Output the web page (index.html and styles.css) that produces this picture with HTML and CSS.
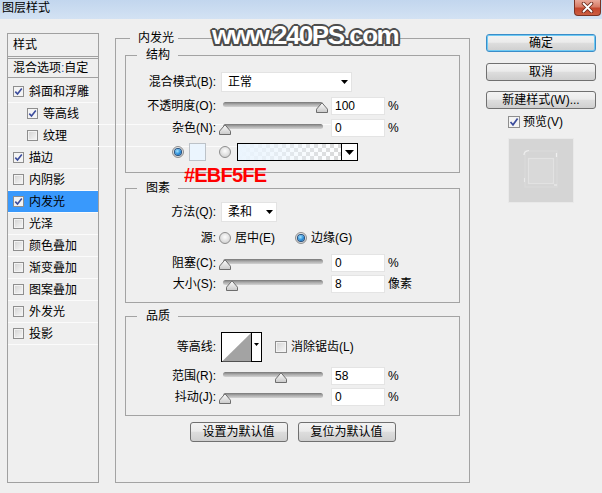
FILE: index.html
```html
<!DOCTYPE html>
<html lang="zh">
<head>
<meta charset="utf-8">
<title>图层样式</title>
<link rel="stylesheet" href="styles.css">
</head>
<body>
<div class="window">
  <header class="titlebar">
    <span class="title">图层样式</span>
    <button class="close" aria-label="关闭">
      <svg width="13" height="11" viewBox="0 0 13 11"><path d="M2.5 1.5 L10.5 9.5 M10.5 1.5 L2.5 9.5" stroke="#6e2a1c" stroke-width="3.6" stroke-linecap="round"/><path d="M2.5 1.5 L10.5 9.5 M10.5 1.5 L2.5 9.5" stroke="#ffffff" stroke-width="1.8" stroke-linecap="round"/></svg>
    </button>
  </header>

  <div class="content">
    <aside class="styles-list">
      <div class="list-head">样式</div>
      <div class="list-blend">混合选项<span class="colon">:</span>自定</div>
      <ul class="fx">
        <li><span class="cb small on"><svg width="9" height="9" viewBox="0 0 9 9"><path d="M1.3 4.6 L3.5 7 L7.8 1.4" fill="none" stroke="#3b4c9c" stroke-width="1.6"/></svg></span>斜面和浮雕</li>
        <li class="sub"><span class="cb small on"><svg width="9" height="9" viewBox="0 0 9 9"><path d="M1.3 4.6 L3.5 7 L7.8 1.4" fill="none" stroke="#3b4c9c" stroke-width="1.6"/></svg></span>等高线</li>
        <li class="sub"><span class="cb small"></span>纹理</li>
        <li><span class="cb small on"><svg width="9" height="9" viewBox="0 0 9 9"><path d="M1.3 4.6 L3.5 7 L7.8 1.4" fill="none" stroke="#3b4c9c" stroke-width="1.6"/></svg></span>描边</li>
        <li><span class="cb small"></span>内阴影</li>
        <li class="active"><span class="cb small on"><svg width="9" height="9" viewBox="0 0 9 9"><path d="M1.3 4.6 L3.5 7 L7.8 1.4" fill="none" stroke="#3b4c9c" stroke-width="1.6"/></svg></span>内发光</li>
        <li><span class="cb small"></span>光泽</li>
        <li><span class="cb small"></span>颜色叠加</li>
        <li><span class="cb small"></span>渐变叠加</li>
        <li><span class="cb small"></span>图案叠加</li>
        <li><span class="cb small"></span>外发光</li>
        <li><span class="cb small"></span>投影</li>
      </ul>
    </aside>

    <fieldset class="group main">
      <legend>内发光</legend>

      <fieldset class="group sub struct">
        <legend>结构</legend>
        <div class="row r-mode">
          <span class="lbl">混合模式(B):</span>
          <div class="select wide"><span>正常</span><svg width="7" height="4" viewBox="0 0 7 4"><path d="M0 0 H7 L3.5 4 Z" fill="#000"/></svg></div>
        </div>
        <div class="row r-op">
          <span class="lbl">不透明度(O):</span>
          <div class="slider"><div class="track"></div><span class="thumb" style="left:97px"><svg width="12" height="11" viewBox="0 0 12 11"><defs><linearGradient id="tg1" x1="0" y1="0" x2="0" y2="1"><stop offset="0" stop-color="#fdfdfd"/><stop offset="1" stop-color="#c9c9c9"/></linearGradient></defs><path d="M0.5 10.5 V7.2 L6 0.8 L11.5 7.2 V10.5 Z" fill="url(#tg1)" stroke="#6d6d6d"/></svg></span></div>
          <span class="num">100</span><span class="unit">%</span>
        </div>
        <div class="row r-noise">
          <span class="lbl">杂色(N):</span>
          <div class="slider"><div class="track"></div><span class="thumb" style="left:0px"><svg width="12" height="11" viewBox="0 0 12 11"><path d="M0.5 10.5 V7.2 L6 0.8 L11.5 7.2 V10.5 Z" fill="url(#tg1)" stroke="#6d6d6d"/></svg></span></div>
          <span class="num">0</span><span class="unit">%</span>
        </div>
        <div class="row r-color">
          <span class="radio on"></span>
          <span class="swatch"></span>
          <span class="radio gap-radio"></span>
          <div class="gradbox"><span class="grad"></span><span class="drop"><svg width="9" height="5" viewBox="0 0 9 5"><path d="M0 0 H9 L4.5 5 Z" fill="#000"/></svg></span></div>
        </div>
      </fieldset>

      <fieldset class="group sub elements">
        <legend>图素</legend>
        <div class="row r-method">
          <span class="lbl">方法(Q):</span>
          <div class="select narrow"><span>柔和</span><svg width="7" height="4" viewBox="0 0 7 4"><path d="M0 0 H7 L3.5 4 Z" fill="#000"/></svg></div>
        </div>
        <div class="row r-source">
          <span class="lbl">源:</span>
          <span class="radio src1"></span><span class="opt">居中(E)</span>
          <span class="radio on src2"></span><span class="opt">边缘(G)</span>
        </div>
        <div class="row r-choke">
          <span class="lbl">阻塞(C):</span>
          <div class="slider"><div class="track"></div><span class="thumb" style="left:0px"><svg width="12" height="11" viewBox="0 0 12 11"><path d="M0.5 10.5 V7.2 L6 0.8 L11.5 7.2 V10.5 Z" fill="url(#tg1)" stroke="#6d6d6d"/></svg></span></div>
          <span class="num">0</span><span class="unit">%</span>
        </div>
        <div class="row r-size">
          <span class="lbl">大小(S):</span>
          <div class="slider"><div class="track"></div><span class="thumb" style="left:7px"><svg width="12" height="11" viewBox="0 0 12 11"><path d="M0.5 10.5 V7.2 L6 0.8 L11.5 7.2 V10.5 Z" fill="url(#tg1)" stroke="#6d6d6d"/></svg></span></div>
          <span class="num">8</span><span class="unit">像素</span>
        </div>
      </fieldset>

      <fieldset class="group sub quality">
        <legend>品质</legend>
        <div class="row r-contour">
          <span class="lbl">等高线:</span>
          <span class="contour"><svg width="41" height="30" viewBox="0 0 41 30"><rect x="0.5" y="0.5" width="40" height="29" fill="#fff" stroke="#000"/><path d="M1 29.5 L30 1 V29.5 Z" fill="#a3a3a3"/><path d="M30.5 0.5 V29.5" stroke="#000"/><path d="M33 11 H38 L35.5 14 Z" fill="#000"/></svg></span>
          <span class="cb aa"></span><span class="opt">消除锯齿(L)</span>
        </div>
        <div class="row r-range">
          <span class="lbl">范围(R):</span>
          <div class="slider"><div class="track"></div><span class="thumb" style="left:56px"><svg width="12" height="11" viewBox="0 0 12 11"><path d="M0.5 10.5 V7.2 L6 0.8 L11.5 7.2 V10.5 Z" fill="url(#tg1)" stroke="#6d6d6d"/></svg></span></div>
          <span class="num">58</span><span class="unit">%</span>
        </div>
        <div class="row r-jitter">
          <span class="lbl">抖动(J):</span>
          <div class="slider"><div class="track"></div><span class="thumb" style="left:0px"><svg width="12" height="11" viewBox="0 0 12 11"><path d="M0.5 10.5 V7.2 L6 0.8 L11.5 7.2 V10.5 Z" fill="url(#tg1)" stroke="#6d6d6d"/></svg></span></div>
          <span class="num">0</span><span class="unit">%</span>
        </div>
      </fieldset>

      <div class="defaults">
        <button class="btn def">设置为默认值</button>
        <button class="btn def">复位为默认值</button>
      </div>
    </fieldset>

    <div class="side">
      <button class="btn side-btn primary">确定</button>
      <button class="btn side-btn cancel">取消</button>
      <button class="btn side-btn newstyle">新建样式(W)...</button>
      <label class="preview-check"><span class="cb on"><svg width="10" height="10" viewBox="0 0 10 10"><path d="M1.5 5 L4 7.8 L8.6 1.6" fill="none" stroke="#3b4c9c" stroke-width="1.7"/></svg></span>预览(V)</label>
      <div class="preview">
        <svg width="66" height="65" viewBox="0 0 66 65">
          <rect x="0.5" y="0.5" width="65" height="64" fill="#d5d5d5" stroke="#e9e9e9"/>
          <rect x="17" y="13" width="32" height="36" fill="none" stroke="#d9d9d9" stroke-width="1.5"/>
          <rect x="20.5" y="20.5" width="25" height="25" fill="#d9d9d9" stroke="#e2e2e2" stroke-width="1.2"/>
          <path d="M16 17 Q16 13 21 12.5" fill="none" stroke="#efefef" stroke-width="1.2"/>
          <path d="M48.5 15 V19" stroke="#f0f0f0" stroke-width="1.2"/>
          <path d="M46 47 H49" stroke="#eeeeee" stroke-width="1.1"/>
          <path d="M16.5 40 V44" stroke="#e9e9e9" stroke-width="1.1"/>
        </svg>
      </div>
    </div>
  </div>

  <div class="watermark">www.240PS.com</div>
  <div class="note">#EBF5FE</div>
</div>
</body>
</html>
```

FILE: styles.css
```css
* { box-sizing: border-box; }
html, body { margin: 0; padding: 0; }
body {
  width: 602px;
  height: 493px;
  overflow: hidden;
  background: #efefef;
  font-family: "Liberation Sans", "Noto Sans CJK SC", sans-serif;
  font-size: 12px;
  line-height: 16px;
  color: #000;
}
.window { position: relative; width: 602px; height: 493px; }

/* title bar */
.titlebar {
  display: flex;
  justify-content: space-between;
  align-items: flex-start;
  height: 19px;
  background: linear-gradient(#c2d6ee, #d3e2f3);
}
.title { padding: 1px 0 0 2px; line-height: 14px; }
.close {
  width: 27px;
  height: 16px;
  margin-right: 1px;
  padding: 0;
  border: 1px solid #7a3224;
  border-top: none;
  border-radius: 0 0 4px 4px;
  background: linear-gradient(#eaa99a, #d77c67 45%, #c4462d 55%, #cc5e42);
  display: flex;
  align-items: center;
  justify-content: center;
}

/* main layout */
.content {
  display: flex;
  align-items: flex-start;
  padding: 11px 0 0 7px;
}

/* styles list */
.styles-list {
  width: 92px;
  height: 450px;
  margin-top: 3px;
  border: 1px solid #a0a0a0;
  flex: none;
}
.list-head {
  height: 25px;
  padding-left: 5px;
  line-height: 22px;
  border-bottom: 3px double #a0a0a0;
}
.list-blend {
  height: 19px;
  padding-left: 5px;
  line-height: 18px;
  border-bottom: 1px solid #a0a0a0;
}
.colon { color: #2a5db0; }
.fx { list-style: none; margin: 0; padding: 3px 0 0; }
.fx li {
  display: flex;
  align-items: center;
  height: 22px;
  padding-left: 5px;
  border-bottom: 1px solid #fbfbfb;
}
.fx li.sub { padding-left: 19px; }
.fx li.active { background: #3999fc; }

/* checkbox */
.cb {
  display: inline-flex;
  align-items: center;
  justify-content: center;
  flex: none;
  width: 12px;
  height: 12px;
  border: 1px solid #8e8e8e;
  background: linear-gradient(135deg, #d2d2d2, #f8f8f8);
  box-shadow: inset 0 0 0 1px #f3f3f3;
}
.cb.small { width: 11px; height: 11px; margin-right: 5px; }
.cb.on { background: #f4f4f4; box-shadow: none; }

/* fieldsets */
.group {
  margin: 0;
  border: 1px solid #a3a3a3;
  min-width: 0;
}
.group > legend {
  margin-left: 5px;
  padding: 0 4px 0 8px;
  line-height: 16px;
  font-size: 12px;
}
.main {
  width: 355px;
  height: 453px;
  margin-left: 16px;
  padding: 1px 9px 0;
  flex: none;
}
.sub { width: 335px; padding: 0; }
.sub > legend { margin-left: 11px; padding: 0 8px 0 9px; }
.struct { padding-bottom: 10px; }
.elements { margin-top: 7px; padding-bottom: 8px; }
.quality { margin-top: 5px; padding-bottom: 8px; }

/* rows */
.row { display: flex; align-items: center; height: 20px; }
.r-mode { margin-top: 9px; }
.r-op { margin-top: 4px; }
.r-noise { margin-top: 2px; }
.r-color { margin-top: 4px; padding-left: 46px; }
.r-method { margin-top: 6px; }
.r-source { margin-top: 6px; }
.r-choke { margin-top: 5px; }
.r-size { margin-top: 1px; }
.r-contour { margin-top: 8px; height: 30px; }
.r-range { margin-top: 4px; }
.r-jitter { margin-top: 1px; }

.lbl { width: 90px; text-align: right; flex: none; white-space: nowrap; }

.select {
  display: flex;
  align-items: center;
  justify-content: space-between;
  height: 20px;
  margin-left: 5px;
  padding: 0 3px 0 6px;
  background: #fff;
  border: 1px solid #e3e3e3;
}
.select.wide { width: 131px; }
.select.narrow { width: 56px; }

.slider {
  position: relative;
  width: 110px;
  height: 20px;
  margin-left: 3px;
  flex: none;
}
.track {
  height: 5px;
  margin: 6px 6px 0 4px;
  border-radius: 3px;
  background: linear-gradient(#777777, #a8a8a8 45%, #d3d3d3);
}
.thumb { position: absolute; top: 6px; width: 12px; height: 11px; display: block; }
.thumb svg { display: block; }

.num {
  width: 54px;
  height: 18px;
  margin-left: 2px;
  padding-left: 3px;
  background: #fff;
  border: 1px solid #e4e4e4;
  line-height: 16px;
  flex: none;
}
.unit { margin-left: 3px; }

/* radio */
.radio {
  display: flex;
  align-items: center;
  justify-content: center;
  flex: none;
  width: 12px;
  height: 12px;
  border-radius: 50%;
  border: 1px solid #8d8d8d;
  background: radial-gradient(circle at 50% 40%, #fdfdfd, #dadada 65%, #c6c6c6);
}
.radio.on::after {
  content: "";
  width: 6px;
  height: 6px;
  border-radius: 50%;
  background: radial-gradient(circle at 40% 35%, #a6e4ff, #2289d8 60%, #0c4f92);
  box-shadow: 0 0 0 1px #244f7e;
}
.gap-radio { margin-left: 13px; }
.src1 { margin-left: 3px; }
.src2 { margin-left: 20px; }
.opt { margin-left: 4px; white-space: nowrap; }

.swatch {
  width: 17px;
  height: 18px;
  margin-left: 5px;
  background: #EBF5FE;
  border: 1px solid #bcc2c8;
  flex: none;
}
.gradbox {
  display: flex;
  width: 121px;
  height: 18px;
  margin-left: 6px;
  border: 1px solid #000;
  flex: none;
}
.grad {
  flex: 1;
  background:
    linear-gradient(to right, #EBF5FE 0%, rgba(235, 245, 254, 0.7) 35%, rgba(235, 245, 254, 0) 100%),
    repeating-conic-gradient(#d9d9d9 0 25%, #ffffff 0 50%) 0 0 / 8px 8px;
}
.drop {
  display: flex;
  align-items: center;
  justify-content: center;
  width: 16px;
  background: #fff;
  border-left: 1px solid #000;
}

.contour { margin-left: 5px; width: 41px; height: 30px; flex: none; }
.contour svg { display: block; }
.aa { margin-left: 13px; }

/* buttons */
.btn {
  font: inherit;
  color: #000;
  padding: 0;
  border: 1px solid #707070;
  border-radius: 3px;
  background: linear-gradient(#f3f3f3, #ebebeb 45%, #dddddd 52%, #cfcfcf);
  line-height: 16px;
}
.defaults {
  display: flex;
  justify-content: center;
  gap: 10px;
  margin-top: 6px;
}
.btn.def { width: 98px; height: 20px; }

.side {
  display: flex;
  flex-direction: column;
  width: 110px;
  margin: 4px 0 0 16px;
  flex: none;
}
.side-btn { width: 110px; height: 18px; }
.primary {
  border-color: #3a8dc9;
  box-shadow: inset 0 0 0 1px #6fcaf3;
}
.cancel { margin-top: 11px; }
.newstyle { margin-top: 10px; }
.preview-check {
  display: flex;
  align-items: center;
  height: 12px;
  margin-top: 7px;
  padding-left: 22px;
}
.preview-check .cb { margin-right: 3px; }
.preview { margin: 10px 0 0 22px; width: 66px; height: 65px; }
.preview svg { display: block; }

/* overlays */
.watermark {
  position: absolute;
  left: 212px;
  top: 21px;
  font-family: "Liberation Sans", sans-serif;
  font-weight: bold;
  font-size: 26px;
  line-height: 28px;
  letter-spacing: -1.5px;
  color: #ffffff;
  text-shadow:
    2px 0 #4d4d4d, -2px 0 #4d4d4d, 0 2px #4d4d4d, 0 -2px #4d4d4d,
    1.5px 1.5px #4d4d4d, -1.5px 1.5px #4d4d4d, 1.5px -1.5px #4d4d4d, -1.5px -1.5px #4d4d4d,
    0 0 3px #8a8a8a;
}
.note {
  position: absolute;
  left: 184px;
  top: 165px;
  font-family: "Liberation Sans", sans-serif;
  font-weight: bold;
  font-size: 20px;
  line-height: 20px;
  letter-spacing: -0.8px;
  color: #ff0000;
}
```
